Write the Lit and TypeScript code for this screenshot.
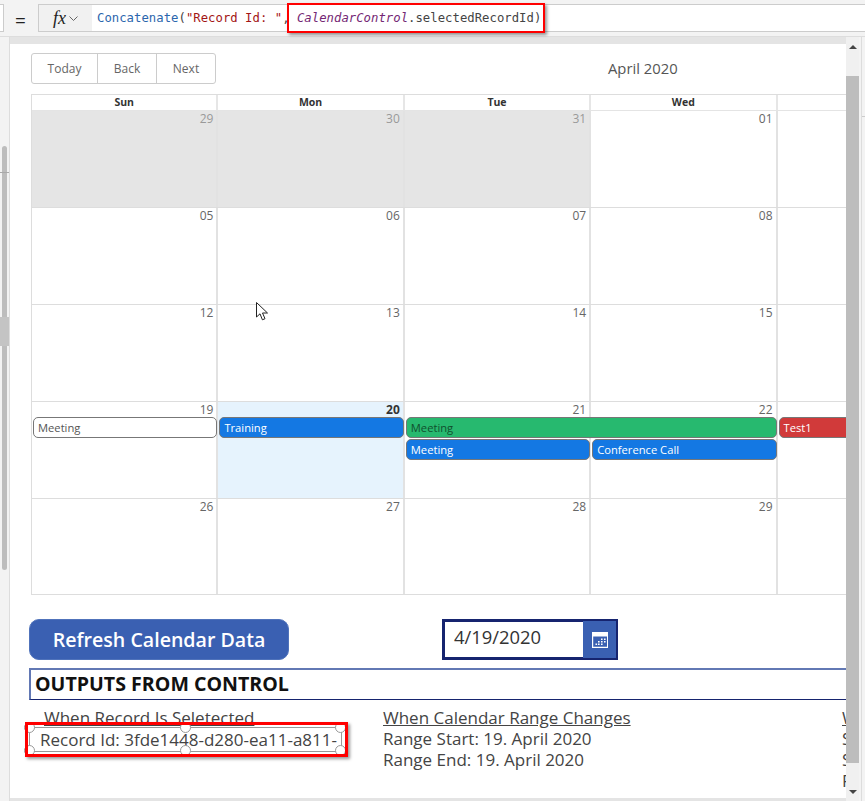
import { LitElement, html, css, svg } from 'lit';
import { customElement } from 'lit/decorators.js';
import { classMap } from 'lit/directives/class-map.js';

type Day = { n: string; kind?: 'prev' | 'today' };
type Ev = { label: string; col: number; span: number; row: number; tone: 'plain' | 'blue' | 'green' | 'red' };

const WEEKS: { days: Day[]; events: Ev[] }[] = [
  { days: [{ n: '29', kind: 'prev' }, { n: '30', kind: 'prev' }, { n: '31', kind: 'prev' }, { n: '01' }, { n: '' }], events: [] },
  { days: [{ n: '05' }, { n: '06' }, { n: '07' }, { n: '08' }, { n: '' }], events: [] },
  { days: [{ n: '12' }, { n: '13' }, { n: '14' }, { n: '15' }, { n: '' }], events: [] },
  {
    days: [{ n: '19' }, { n: '20', kind: 'today' }, { n: '21' }, { n: '22' }, { n: '' }],
    events: [
      { label: 'Meeting', col: 1, span: 1, row: 2, tone: 'plain' },
      { label: 'Training', col: 2, span: 1, row: 2, tone: 'blue' },
      { label: 'Meeting', col: 3, span: 2, row: 2, tone: 'green' },
      { label: 'Test1', col: 5, span: 1, row: 2, tone: 'red' },
      { label: 'Meeting', col: 3, span: 1, row: 3, tone: 'blue' },
      { label: 'Conference Call', col: 4, span: 1, row: 3, tone: 'blue' },
    ],
  },
  { days: [{ n: '26' }, { n: '27' }, { n: '28' }, { n: '29' }, { n: '' }], events: [] },
];

const calendarIcon = svg`<path fill="none" stroke="#fff" stroke-width="1.2" d="M.6.6h15v14.8H.6z"/><path fill="#fff" d="M1 1h14v3.4H1zM9 6.5h1.6v1.6H9zM12 6.5h1.6v1.6H12zM6 9h1.6v1.6H6zM9 9h1.6v1.6H9zM12 9h1.6v1.6H12zM3.500 11.500h1.600v1.600H3.500zM6 11.500h1.600v1.600H6zM9 11.500h1.600v1.600H9z"/>`;

@customElement('app-root')
export class AppRoot extends LitElement {
  static styles = css`
    :host {
      display: block;
      position: relative;
      width: 865px;
      height: 801px;
      overflow: hidden;
      background: #f3f3f3;
      font-family: 'Open Sans', sans-serif;
      color: #444;
    }
    .formula-bar {
      display: flex;
      align-items: stretch;
      height: 28px;
      padding-top: 4px;
      padding-bottom: 4px;
      border-bottom: 1px solid #ddd;
    }
    .stub {
      width: 3px;
      background: #fff;
      border: 1px solid #ccc;
      border-left: 0;
    }
    .equals {
      width: 34px;
      padding-right: 1px;
      text-align: center;
      font-size: 19px;
      line-height: 33px;
      color: #222;
      box-sizing: border-box;
    }
    .fx {
      display: flex;
      align-items: center;
      gap: 3px;
      width: 54px;
      box-sizing: border-box;
      padding-left: 14px;
      background: #f1f1f1;
      border: 1px solid #ccc;
      border-right: 0;
      font: italic 400 18px 'Liberation Serif', serif;
      color: #222;
    }
    .input {
      flex: 1;
      position: relative;
      padding-left: 5px;
      background: #fff;
      border-top: 1px solid #ccc;
      border-bottom: 1px solid #ccc;
      font: 12.25px/26px 'DejaVu Sans Mono', monospace;
      letter-spacing: 0.03px;
      white-space: pre;
      color: #444;
    }
    .fn { color: #2b66ad; }
    .str { color: #a31515; }
    .ctl { color: #742774; font-style: italic; }
    .mark {
      position: absolute;
      border: 2px solid #f00;
      box-shadow: 2px 2px 3px rgba(0, 0, 0, 0.4);
      box-sizing: border-box;
    }
    .formula-mark {
      left: 195px;
      top: -2px;
      width: 258px;
      height: 30px;
    }
    .body {
      display: flex;
      height: 764px;
    }
    .rail {
      position: relative;
      width: 9px;
      border-right: 1px solid #ddd;
    }
    .rail .thumb {
      position: absolute;
      left: 2px;
      top: 109px;
      width: 5px;
      height: 424px;
      border-radius: 3px;
      background: #bdbdbd;
    }
    .rail .grip {
      position: absolute;
      left: 0;
      top: 280px;
      width: 9px;
      height: 29px;
      background: #c4c4c4;
    }
    .rail .rule {
      position: absolute;
      left: 0;
      top: 135px;
      width: 9px;
      height: 1px;
      background: #aaa;
    }
    .stage {
      flex: 1;
      min-width: 0;
      border-top: 7px solid #e4e4e4;
      border-bottom: 3px solid #e4e4e4;
      background: #fff;
      overflow: hidden;
      padding: 9px 0 0 21px;
      box-sizing: border-box;
    }
    .topline {
      display: flex;
      height: 31px;
    }
    .nav {
      display: flex;
      width: 185px;
      box-sizing: border-box;
      border: 1px solid #ccc;
      border-radius: 3px;
      font-size: 12px;
      color: #666;
    }
    .nav span {
      display: flex;
      align-items: center;
      justify-content: center;
      border-right: 1px solid #ccc;
    }
    .nav span:nth-child(1) { width: 65px; }
    .nav span:nth-child(2) { width: 58px; }
    .nav span:nth-child(3) { flex: 1; border-right: 0; }
    .title {
      margin-left: 392px;
      font-size: 14.8px;
      line-height: 30px;
      color: #555;
    }
    .calendar {
      width: 933px;
      margin-top: 10px;
      border-left: 1px solid #ddd;
      border-top: 1px solid #ddd;
    }
    .heads,
    .week {
      display: grid;
      grid-template-columns: repeat(5, 186.4px);
    }
    .heads {
      height: 15px;
    }
    .heads div {
      border-right: 2px solid #e6e6e6;
      text-align: center;
      font: 700 10.500px/15px 'Open Sans', sans-serif;
      color: #333;
    }
    .week {
      grid-template-rows: 15px 22px 22px 1fr;
      height: 97px;
      box-sizing: border-box;
      border-top: 1px solid #ddd;
    }
    .week.first { border-top: 1px solid #e4e4e4; }
    .week:last-child { border-bottom: 1px solid #ddd; }
    .cell {
      grid-row: 1 / -1;
      border-right: 2px solid #e2e2e2;
      padding: 0 3px 0 0;
      text-align: right;
      font-size: 12px;
      line-height: 16px;
      color: #666;
    }
    .cell.prev { background: #e5e5e5; color: #999; }
    .cell.today { background: #e6f3fd; color: #333; font-weight: 700; }
    .event {
      z-index: 1;
      height: 21px;
      margin: 0 1px 0 1px;
      padding-left: 4px;
      box-sizing: border-box;
      border: 1px solid #777;
      border-radius: 5px;
      font-size: 11.2px;
      line-height: 19px;
      white-space: nowrap;
      overflow: hidden;
    }
    .event.plain { background: #fff; color: #555; }
    .event.blue { background: #1478e3; color: #fff; }
    .event.green { background: #27b96f; color: #11502e; }
    .event.red { background: #d13a3a; color: #fff; }
    .actions {
      display: flex;
      gap: 153px;
      margin: 24px 0 0 -2px;
    }
    .refresh {
      width: 260px;
      height: 41px;
      box-sizing: border-box;
      border: 1px solid #5073bb;
      border-radius: 10px;
      background: #3a60b2;
      color: #fff;
      text-align: center;
      font-size: 19.6px;
      font-weight: 600;
      line-height: 39px;
    }
    .date {
      display: flex;
      width: 176px;
      height: 41px;
      box-sizing: border-box;
      border: 2px solid #16246f;
    }
    .date .value {
      flex: 1;
      padding-left: 9px;
      font-size: 18.4px;
      line-height: 30px;
      color: #333;
      border: 1px solid #16246f;
      border-right: 0;
    }
    .date .btn {
      display: flex;
      align-items: center;
      justify-content: center;
      width: 33px;
      background: #3a60b2;
    }
    .heading {
      width: 900px;
      height: 32px;
      margin: 8px 0 0 -2px;
      box-sizing: border-box;
      padding-left: 4px;
      border-top: 2px solid #6278b4;
      border-left: 2px solid #6278b4;
      border-bottom: 1px solid #16246f;
      font-size: 19.6px;
      font-weight: 700;
      line-height: 27px;
      color: #111;
    }
    .outputs {
      display: flex;
      width: 1000px;
      margin: 7px 0 0 -1px;
      font-size: 17px;
      line-height: 21px;
      color: #444;
      white-space: nowrap;
    }
    .col { flex: none; position: relative; }
    .col.a { width: 339px; padding-left: 14px; }
    .col.b { width: 459px; }
    .col .u { text-decoration: underline; }
    .selected {
      position: absolute;
      left: -1px;
      top: 20px;
      width: 313px;
      height: 25px;
      box-sizing: border-box;
      padding-left: 10px;
      background: #fff;
      border: 1px solid #999;
      line-height: 23px;
    }
    .handle {
      position: absolute;
      width: 11px;
      height: 11px;
      box-sizing: border-box;
      margin: -6px 0 0 -6px;
      border: 1px solid #999;
      border-radius: 50%;
      background: #fff;
    }
    .selected-mark {
      left: -5px;
      top: 15px;
      width: 323px;
      height: 35px;
      border-width: 3px;
      pointer-events: none;
    }
    .scroll {
      position: relative;
      width: 13px;
      background: #f0f0f0;
    }
    .scroll .thumb {
      position: absolute;
      left: 0;
      top: 39px;
      width: 13px;
      height: 687px;
      background: #bdbdbd;
    }
    .arrow {
      position: absolute;
      left: 3px;
      width: 0;
      height: 0;
      border-left: 4px solid transparent;
      border-right: 4px solid transparent;
    }
    .arrow.up { top: 8px; border-bottom: 4px solid #444; }
    .arrow.down { top: 753px; border-top: 4px solid #444; }
    .edge {
      position: relative;
      width: 3px;
      margin-left: 2px;
      border-left: 1px solid #ddd;
    }
    .edge .tick {
      position: absolute;
      left: 0;
      top: 79px;
      width: 4px;
      height: 1px;
      background: #ccc;
    }
    .pointer {
      position: absolute;
      left: 256px;
      top: 302px;
    }
  `;

  private week(w: (typeof WEEKS)[number], i: number) {
    return html`<div class=${classMap({ week: true, first: i === 0 })}>
      ${w.days.map(
        (d, c) => html`<div
          class=${classMap({ cell: true, prev: d.kind === 'prev', today: d.kind === 'today' })}
          style="grid-column:${c + 1}"
        >${d.n}</div>`,
      )}
      ${w.events.map(
        (e) => html`<div
          class="event ${e.tone}"
          style="grid-column:${e.col} / span ${e.span};grid-row:${e.row}"
        >${e.label}</div>`,
      )}
    </div>`;
  }

  render() {
    const handles = [0, 50, 100].flatMap((x) => [0, 100].map((y) => `left:${x}%;top:${y}%`));
    return html`
      <div class="formula-bar">
        <div class="stub"></div>
        <div class="equals">=</div>
        <div class="fx">
          <span>fx</span>
          <svg width="9" height="5" viewBox="0 0 9 5"><path d="M.5.5l4 4 4-4" fill="none" stroke="#666"/></svg>
        </div>
        <div class="input"><span class="fn">Concatenate</span>(<span class="str">"Record Id: "</span>, <span class="ctl">CalendarControl</span>.selectedRecordId)<div class="mark formula-mark"></div></div>
      </div>
      <div class="body">
        <div class="rail">
          <div class="thumb"></div>
          <div class="rule"></div>
          <div class="grip"></div>
        </div>
        <div class="stage">
          <div class="topline">
            <div class="nav"><span>Today</span><span>Back</span><span>Next</span></div>
            <div class="title">April 2020</div>
          </div>
          <div class="calendar">
            <div class="heads">
              <div>Sun</div><div>Mon</div><div>Tue</div><div>Wed</div><div></div>
            </div>
            ${WEEKS.map((w, i) => this.week(w, i))}
          </div>
          <div class="actions">
            <div class="refresh">Refresh Calendar Data</div>
            <div class="date">
              <div class="value">4/19/2020</div>
              <div class="btn"><svg width="16" height="16" viewBox="0 0 16 16">${calendarIcon}</svg></div>
            </div>
          </div>
          <div class="heading">OUTPUTS FROM CONTROL</div>
          <div class="outputs">
            <div class="col a">
              <div class="u">When Record Is Seletected</div>
              <div class="selected">
                Record Id: 3fde1448-d280-ea11-a811-
                ${handles.map((s) => html`<div class="handle" style=${s}></div>`)}
              </div>
              <div class="mark selected-mark"></div>
            </div>
            <div class="col b">
              <div class="u">When Calendar Range Changes</div>
              <div>Range Start: 19. April 2020</div>
              <div>Range End: 19. April 2020</div>
            </div>
            <div class="col c">
              <div class="u">When</div>
              <div>Start</div>
              <div>Sel</div>
              <div>Filter</div>
            </div>
          </div>
        </div>
        <div class="scroll">
          <div class="arrow up"></div>
          <div class="thumb"></div>
          <div class="arrow down"></div>
        </div>
        <div class="edge"><div class="tick"></div></div>
      </div>
      <svg class="pointer" width="13" height="19" viewBox="0 0 13 19">
        <path d="M.5.5v14.500l3.500-3.200 2.400 6 2.600-1.100-2.500-5.700h5z" fill="#fff" stroke="#222"/>
      </svg>
    `;
  }
}

declare global {
  interface HTMLElementTagNameMap {
    'app-root': AppRoot;
  }
}
